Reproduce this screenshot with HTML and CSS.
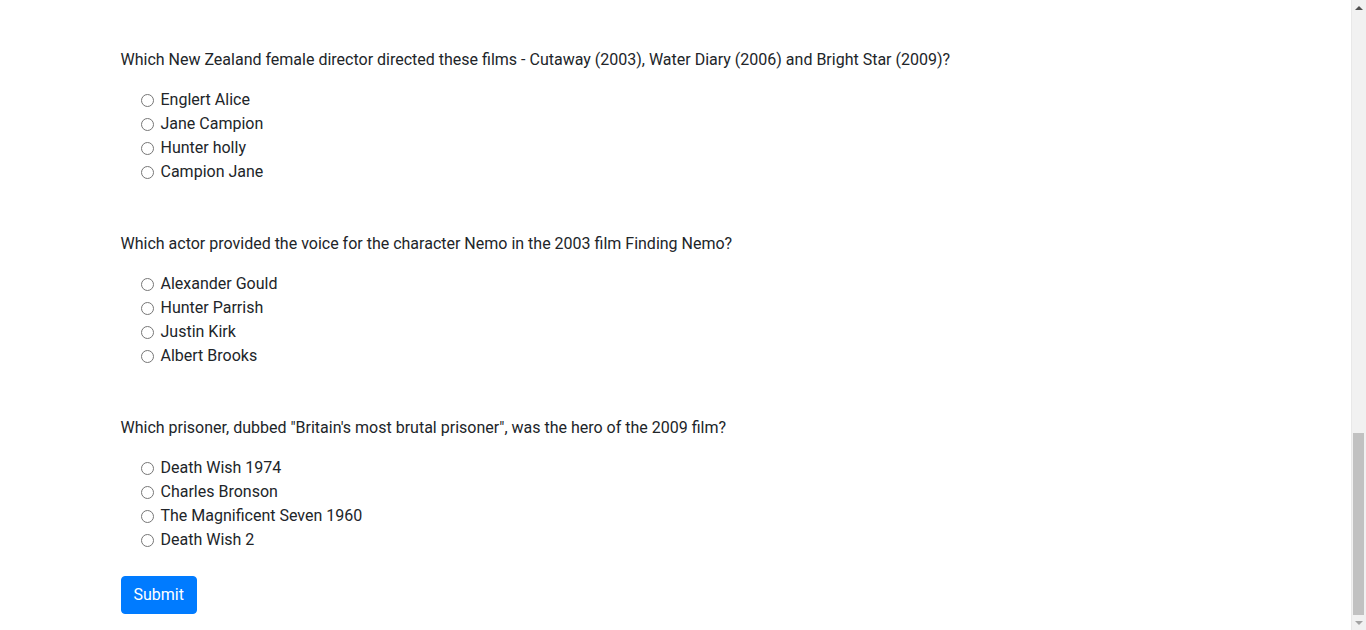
FILE: index.html
```html
<!DOCTYPE html>
<html lang="en">
<head>
<meta charset="utf-8">
<title>Movie Quiz</title>
<link rel="stylesheet" href="styles.css">
</head>
<body>
<div class="container">
  <form class="quiz">
    <div class="question">
      <p class="q-text">Which New Zealand female director directed these films - Cutaway (2003), Water Diary (2006) and Bright Star (2009)?</p>
      <div class="options">
        <label class="option"><input type="radio" name="q1"><span>Englert Alice</span></label>
        <label class="option"><input type="radio" name="q1"><span>Jane Campion</span></label>
        <label class="option"><input type="radio" name="q1"><span>Hunter holly</span></label>
        <label class="option"><input type="radio" name="q1"><span>Campion Jane</span></label>
      </div>
    </div>
    <div class="question">
      <p class="q-text">Which actor provided the voice for the character Nemo in the 2003 film Finding Nemo?</p>
      <div class="options">
        <label class="option"><input type="radio" name="q2"><span>Alexander Gould</span></label>
        <label class="option"><input type="radio" name="q2"><span>Hunter Parrish</span></label>
        <label class="option"><input type="radio" name="q2"><span>Justin Kirk</span></label>
        <label class="option"><input type="radio" name="q2"><span>Albert Brooks</span></label>
      </div>
    </div>
    <div class="question last">
      <p class="q-text">Which prisoner, dubbed "Britain's most brutal prisoner", was the hero of the 2009 film?</p>
      <div class="options">
        <label class="option"><input type="radio" name="q3"><span>Death Wish 1974</span></label>
        <label class="option"><input type="radio" name="q3"><span>Charles Bronson</span></label>
        <label class="option"><input type="radio" name="q3"><span>The Magnificent Seven 1960</span></label>
        <label class="option"><input type="radio" name="q3"><span>Death Wish 2</span></label>
      </div>
    </div>
    <button type="button" class="btn-submit">Submit</button>
  </form>
</div>
<div class="scrollbar" aria-hidden="true">
  <div class="sb-arrow sb-up"></div>
  <div class="sb-track"><div class="sb-thumb"></div></div>
  <div class="sb-arrow sb-down"></div>
</div>
</body>
</html>
```

FILE: styles.css
```css
*, *::before, *::after {
  box-sizing: border-box;
}
html, body {
  margin: 0;
  padding: 0;
  overflow: hidden;
}
body {
  font-family: Roboto, "Liberation Sans", sans-serif;
  font-size: 16px;
  line-height: 1.5;
  color: #212529;
  background: #fff;
  padding-right: 15px;
}
.container {
  max-width: 1140px;
  margin: 0 auto;
  padding: 48px 15px 0;
}
.quiz {
  display: flex;
  flex-direction: column;
  align-items: flex-start;
  padding-bottom: 16px;
}
.question {
  margin-bottom: 48px;
}
.question.last {
  margin-bottom: 24px;
}
.q-text {
  margin: 0 0 16px 0;
}
.options {
  display: flex;
  flex-direction: column;
  padding-left: 20px;
}
.option {
  display: flex;
  align-items: center;
  height: 24px;
}
.option input {
  width: 13px;
  height: 13px;
  margin: 0 7px 0 0;
}
.btn-submit {
  font-family: inherit;
  font-size: 16px;
  line-height: 1.5;
  color: #fff;
  background: #007bff;
  border: 1px solid #007bff;
  border-radius: 4px;
  padding: 6px 12px;
  cursor: pointer;
}

/* fake window scrollbar */
.scrollbar {
  position: fixed;
  top: 0;
  right: 0;
  width: 15px;
  height: 100%;
  background: #f1f1f1;
  box-shadow: inset 1px 0 0 #e8e8e8;
  display: flex;
  flex-direction: column;
}
.sb-arrow {
  height: 15px;
  display: flex;
  align-items: center;
  justify-content: center;
  flex-shrink: 0;
}
.sb-up::before,
.sb-down::before {
  content: "";
  width: 0;
  height: 0;
  border-left: 4px solid transparent;
  border-right: 4px solid transparent;
}
.sb-up::before {
  border-bottom: 4px solid #505050;
}
.sb-down::before {
  border-top: 4px solid #a3a3a3;
}
.sb-track {
  flex: 1;
  display: flex;
  flex-direction: column;
  justify-content: flex-end;
  padding: 0 2px;
}
.sb-thumb {
  height: 182px;
  background: #c1c1c1;
}
```
